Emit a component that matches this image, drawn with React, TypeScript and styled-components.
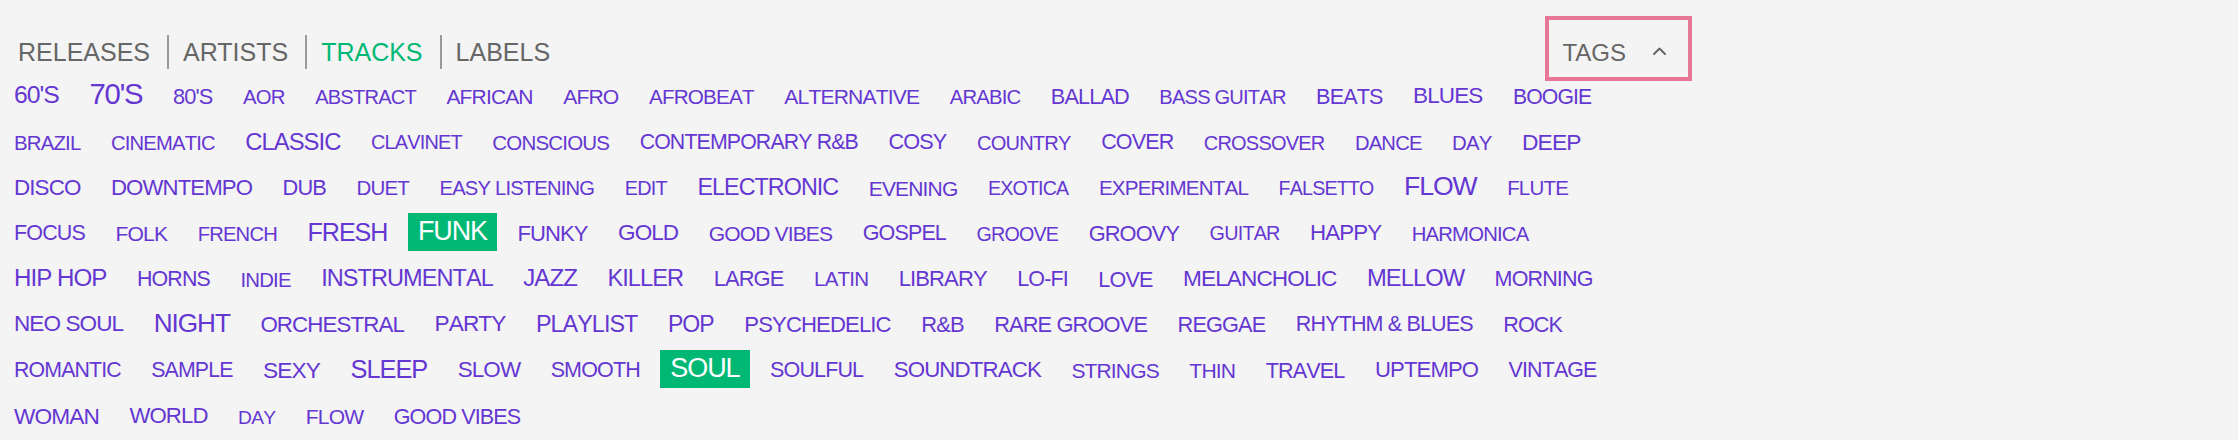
import styled, { createGlobalStyle } from "styled-components";

const GlobalStyle = createGlobalStyle`
  body {
    margin: 0;
    background: #f4f4f4;
    font-family: "Liberation Sans", Arial, Helvetica, sans-serif;
  }
`;

const Page = styled.div`
  width: 1688px;
  padding: 16px 0 0 4px;
`;

const Header = styled.header`
  display: flex;
  justify-content: space-between;
  align-items: flex-start;
  margin-bottom: -5.2px;
`;

const Nav = styled.nav`
  display: flex;
  margin-top: 19px;
`;

const NavItem = styled.a<{ $active?: boolean }>`
  font-size: 25px;
  line-height: 34px;
  padding: 0 17px 0 14px;
  color: ${(p) => (p.$active ? "#00b873" : "#666")};
  text-decoration: none;
  cursor: pointer;

  & + & {
    border-left: 2px solid #9a9a9a;
  }
`;

const TagsToggle = styled.button`
  display: flex;
  align-items: center;
  gap: 27px;
  box-sizing: border-box;
  height: 65px;
  padding: 8px 22px 0 13px;
  border: 4px solid #e87696;
  background: transparent;
  font-family: "Liberation Sans", Arial, Helvetica, sans-serif;
  font-size: 24px;
  color: #666;
  cursor: pointer;

  svg {
    margin-bottom: 3px;
  }
`;

const TagList = styled.ul`
  list-style: none;
  margin: 0;
  padding: 0;
  width: 1641px;
  display: flex;
  flex-wrap: wrap;
  row-gap: 7.66px;
`;

const Tag = styled.li<{ $size: number; $active?: boolean }>`
  box-sizing: border-box;
  height: 38px;
  padding: ${(p) => (28.4 - 0.8465 * p.$size).toFixed(2)}px 10px 0;
  margin-right: 10.5px;
  font-size: ${(p) => p.$size}px;
  line-height: 1;
  letter-spacing: -0.04em;
  font-kerning: none;
  white-space: nowrap;
  color: ${(p) => (p.$active ? "#fff" : "#6437d2")};
  background: ${(p) => (p.$active ? "#00b873" : "transparent")};
  cursor: pointer;
`;

// [label, font size, selected]
const tags: [string, number, boolean?][] = [
  ["60'S", 24.8], ["70'S", 29.3], ["80'S", 21.8], ["AOR", 20.4], ["ABSTRACT", 20.1],
  ["AFRICAN", 21], ["AFRO", 21.1], ["AFROBEAT", 20.7], ["ALTERNATIVE", 21.1],
  ["ARABIC", 20.3], ["BALLAD", 21.7], ["BASS GUITAR", 20.1], ["BEATS", 21.6],
  ["BLUES", 22.5], ["BOOGIE", 21.2],
  ["BRAZIL", 20.4], ["CINEMATIC", 20.2], ["CLASSIC", 23.8], ["CLAVINET", 19.9],
  ["CONSCIOUS", 20.5], ["CONTEMPORARY R&B", 21.3], ["COSY", 21.7], ["COUNTRY", 20.1],
  ["COVER", 21.5], ["CROSSOVER", 20], ["DANCE", 20.2], ["DAY", 20.4], ["DEEP", 22.8],
  ["DISCO", 22.4], ["DOWNTEMPO", 22.2], ["DUB", 21.8], ["DUET", 20.5],
  ["EASY LISTENING", 20.2], ["EDIT", 19.9], ["ELECTRONIC", 23.3], ["EVENING", 21],
  ["EXOTICA", 19.6], ["EXPERIMENTAL", 20.6], ["FALSETTO", 19.6], ["FLOW", 26.6],
  ["FLUTE", 20.5],
  ["FOCUS", 21.5], ["FOLK", 21.1], ["FRENCH", 20.2], ["FRESH", 25.1], ["FUNK", 26.9, true],
  ["FUNKY", 22], ["GOLD", 22.5], ["GOOD VIBES", 21], ["GOSPEL", 21.5], ["GROOVE", 19.7],
  ["GROOVY", 21.8], ["GUITAR", 19.8], ["HAPPY", 22.3], ["HARMONICA", 20.3],
  ["HIP HOP", 24.14], ["HORNS", 21.4], ["INDIE", 20.39], ["INSTRUMENTAL", 23.53],
  ["JAZZ", 24.04], ["KILLER", 23.64], ["LARGE", 21.91], ["LATIN", 20.59],
  ["LIBRARY", 22.01], ["LO-FI", 21.51], ["LOVE", 21.61], ["MELANCHOLIC", 22.62],
  ["MELLOW", 23.74], ["MORNING", 21.51],
  ["NEO SOUL", 22.54], ["NIGHT", 26.17], ["ORCHESTRAL", 22.33], ["PARTY", 22.64],
  ["PLAYLIST", 23.34], ["POP", 23.04], ["PSYCHEDELIC", 22.13], ["R&B", 21.93],
  ["RARE GROOVE", 21.83], ["REGGAE", 21.73], ["RHYTHM & BLUES", 21.53], ["ROCK", 21.63],
  ["ROMANTIC", 21.3], ["SAMPLE", 21.3], ["SEXY", 22.7], ["SLEEP", 25.4], ["SLOW", 22.4],
  ["SMOOTH", 21.5], ["SOUL", 27, true], ["SOULFUL", 21.5], ["SOUNDTRACK", 22.3],
  ["STRINGS", 21], ["THIN", 21.1], ["TRAVEL", 21.6], ["UPTEMPO", 22.1], ["VINTAGE", 21.4],
  ["WOMAN", 22.7], ["WORLD", 22.2], ["DAY", 19.2], ["FLOW", 21.05], ["GOOD VIBES", 21.56],
];

const sections = ["RELEASES", "ARTISTS", "TRACKS", "LABELS"];

const App = (): JSX.Element => {
  return (
    <>
      <GlobalStyle />
      <Page>
        <Header>
          <Nav>
            {sections.map((s) => (
              <NavItem key={s} $active={s === "TRACKS"}>
                {s}
              </NavItem>
            ))}
          </Nav>
          <TagsToggle>
            TAGS
            <svg width="13" height="8" viewBox="0 0 13 8" fill="none">
              <polyline
                points="1,7 6.5,1.5 12,7"
                stroke="#666"
                strokeWidth="2"
                strokeLinecap="round"
                strokeLinejoin="round"
              />
            </svg>
          </TagsToggle>
        </Header>
        <TagList>
          {tags.map(([label, size, active], i) => (
            <Tag key={label + i} $size={size} $active={active}>
              {label}
            </Tag>
          ))}
        </TagList>
      </Page>
    </>
  );
};

export default App;
